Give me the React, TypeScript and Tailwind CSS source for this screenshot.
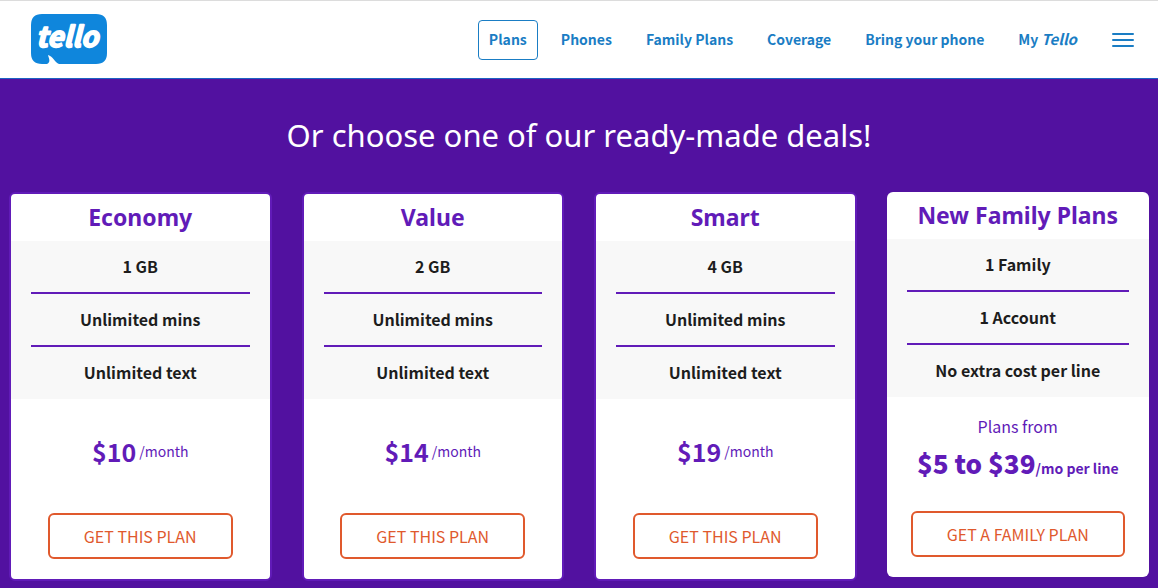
import { clsx } from 'clsx';

interface Plan {
  name: string;
  features: string[];
  price: string;
  unit: string;
  intro?: string;
  cta: string;
}

const navItems = ['Plans', 'Phones', 'Family Plans', 'Coverage', 'Bring your phone'];

const plans: Plan[] = [
  { name: 'Economy', features: ['1 GB', 'Unlimited mins', 'Unlimited text'], price: '$10', unit: '/month', cta: 'GET THIS PLAN' },
  { name: 'Value', features: ['2 GB', 'Unlimited mins', 'Unlimited text'], price: '$14', unit: '/month', cta: 'GET THIS PLAN' },
  { name: 'Smart', features: ['4 GB', 'Unlimited mins', 'Unlimited text'], price: '$19', unit: '/month', cta: 'GET THIS PLAN' },
  {
    name: 'New Family Plans',
    features: ['1 Family', '1 Account', 'No extra cost per line'],
    intro: 'Plans from',
    price: '$5 to $39',
    unit: '/mo per line',
    cta: 'GET A FAMILY PLAN',
  },
];

function Logo() {
  return (
    <svg width="76" height="52" viewBox="0 0 76 52" role="img" aria-label="tello">
      <path
        fill="#0f86dc"
        d="M11 0H65Q76 0 76 11V39Q76 50 65 50H28C24 49 22 42 17 41C18 45 20 48 16 50H11Q0 50 0 39V11Q0 0 11 0Z"
      />
      <text
        x="36"
        y="33"
        textAnchor="middle"
        fill="#fff"
        stroke="#fff"
        strokeWidth="1.6"
        strokeLinejoin="round"
        className="font-['Noto_Sans_CJK_SC'] text-[28px] font-bold italic"
      >
        tello
      </text>
    </svg>
  );
}

function Header() {
  return (
    <header className="flex h-[79px] items-center justify-between border-t border-b border-t-[#dcdcdc] border-b-[#1c62c4] bg-white pr-6 pl-[31px]">
      <a href="#">
        <Logo />
      </a>
      <nav className="flex items-center gap-3 text-[14px] font-bold text-[#1a7dc4]">
        {navItems.map((item, i) => (
          <a
            key={item}
            href="#"
            className={clsx(
              'flex h-10 items-center rounded border px-[10px] whitespace-nowrap',
              i === 0 ? 'border-[#1a7dc4]' : 'border-transparent',
            )}
          >
            {item}
          </a>
        ))}
        <a href="#" className="flex h-10 items-center gap-[3px] border border-transparent px-[10px] whitespace-nowrap">
          My <span className="text-[15px] italic">Tello</span>
        </a>
        <button type="button" aria-label="Menu" className="ml-3">
          <svg width="22" height="14" viewBox="0 0 22 14" stroke="#1a7dc4" strokeWidth="2" strokeLinecap="round">
            <path d="M1 1h20M1 7h20M1 13h20" />
          </svg>
        </button>
      </nav>
    </header>
  );
}

function PlanCard({ plan }: { plan: Plan }) {
  return (
    <article
      className={clsx(
        'flex flex-col rounded-md bg-white text-center',
        !plan.intro && 'border-2 border-[#611bb8]',
      )}
    >
      <h2 className="h-[47px] font-['Noto_Sans'] text-[23px] leading-[47px] font-bold text-[#611bb8]">{plan.name}</h2>

      <ul className="bg-[#f8f8f8] px-5 text-base font-bold text-[#1d1d1d]">
        {plan.features.map((feature) => (
          <li key={feature} className="h-[53px] border-b-2 border-[#611bb8] leading-[51px] last:h-[52px] last:border-b-0">
            {feature}
          </li>
        ))}
      </ul>

      <div className="flex h-[114px] flex-col justify-center pb-[6px] text-[#611bb8]">
        {plan.intro && <p className="text-base leading-7">{plan.intro}</p>}
        {plan.intro ? (
          <p className="text-[26px] leading-[46px] font-black whitespace-nowrap">
            {plan.price}
            <span className="text-[14px] font-bold">{plan.unit}</span>
          </p>
        ) : (
          <p className="flex items-center justify-center gap-[3px] pb-1 leading-[46px]">
            <span className="text-[25px] font-bold">{plan.price}</span>
            <span className="text-[14px]">{plan.unit}</span>
          </p>
        )}
      </div>

      <button
        type="button"
        className="mb-5 h-[46px] cursor-pointer self-center rounded-md border-2 border-[#e0592d] px-[34px] text-base whitespace-nowrap text-[#e0592d]"
      >
        {plan.cta}
      </button>
    </article>
  );
}

export default function App() {
  return (
    <div className="min-h-screen bg-[#5211a0] font-['Noto_Sans_CJK_SC',sans-serif]">
      <Header />
      <main className="px-[9px] pb-2">
        <h1 className="py-9 text-center font-['Noto_Sans'] text-[31px] leading-[41px] text-white">
          Or choose one of our ready-made deals!
        </h1>
        <section className="grid grid-cols-4 items-start gap-[30px]">
          {plans.map((plan) => (
            <PlanCard key={plan.name} plan={plan} />
          ))}
        </section>
      </main>
    </div>
  );
}
